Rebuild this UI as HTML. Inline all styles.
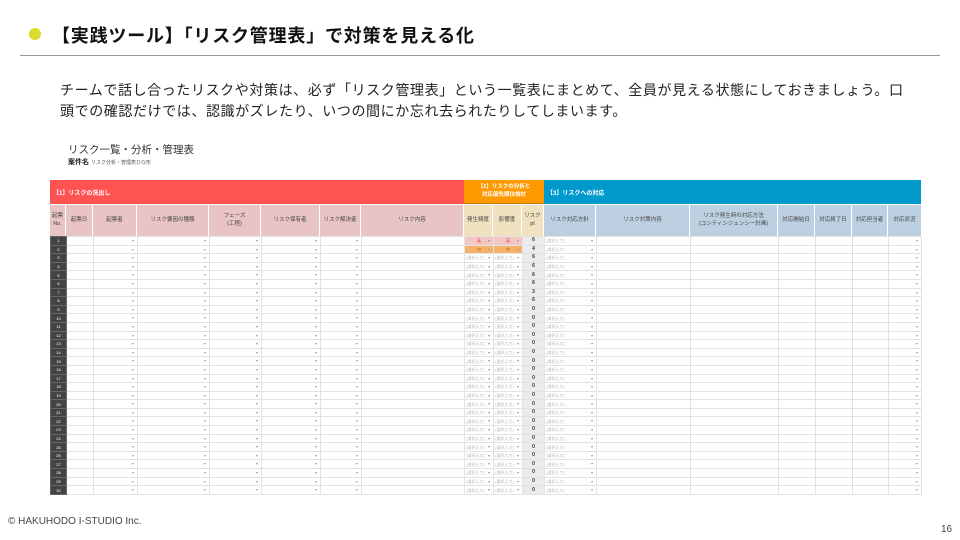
<!DOCTYPE html>
<html><head><meta charset="utf-8"><style>
*{margin:0;padding:0;box-sizing:border-box}
body{width:960px;height:540px;background:#fff;position:relative;overflow:hidden;font-family:"Liberation Sans","Noto Sans CJK JP",sans-serif;color:#222}
.abs{position:absolute}
table{border-collapse:collapse;table-layout:fixed;position:absolute;left:50px;top:236px;width:871px}
td{height:8.6px;border:1px solid #e2e2e2;font-size:4px;line-height:7px;padding:0 1px;position:relative;white-space:nowrap;overflow:hidden;color:#bbb}
td.n{background:#444;color:#fff;text-align:center;border-color:#666}
td.a::after{content:"▾";position:absolute;right:3px;top:0;color:#999;font-size:4px}
td.p{background:#ebebeb;color:#333;text-align:center;font-weight:bold;font-size:5px}
td.h{background:#f4c7c3;color:#d33;text-align:center}
td.m{background:#f6b26b;color:#a50;text-align:center}
.hd{position:absolute;font-size:5.5px;color:#444;text-align:center;display:flex;align-items:center;justify-content:center;line-height:1.3;border-right:1px solid #fff}
</style></head><body>
<div class="abs" style="left:29px;top:28px;width:12px;height:12px;border-radius:50%;background:#d9dc2a"></div>
<div class="abs" style="left:52px;top:22px;font-size:18px;letter-spacing:0.8px;font-weight:bold;color:#111;white-space:nowrap">【実践ツール】「リスク管理表」で対策を見える化</div>
<div class="abs" style="left:20px;top:55px;width:920px;height:1px;background:#999"></div>
<div class="abs" style="left:60px;top:80px;font-size:14px;letter-spacing:0.6px;line-height:21px;color:#222;width:890px;white-space:nowrap">チームで話し合ったリスクや対策は、必ず「リスク管理表」という一覧表にまとめて、全員が見える状態にしておきましょう。口<br>頭での確認だけでは、認識がズレたり、いつの間にか忘れ去られたりしてしまいます。</div>
<div class="abs" style="left:68px;top:142px;font-size:10.5px;color:#333">リスク一覧・分析・管理表</div>
<div class="abs" style="left:68px;top:157px;font-size:7px;font-weight:bold;color:#222">案件名 <span style="font-weight:normal;font-size:5px;color:#555">リスク分析・管理表ひな形</span></div>

<div class="abs" style="left:50px;top:180px;width:414px;height:24px;background:#ff5252;color:#fff;font-size:6px;font-weight:bold;padding:8px 0 0 3px">【1】リスクの洗出し</div>
<div class="abs" style="left:464px;top:180px;width:80px;height:24px;background:#ff9900;color:#fff;font-size:5.5px;font-weight:bold;text-align:center;line-height:8px;padding-top:3px;border-bottom:1px solid #c70">【2】リスクの分析と<br>対応優先順位検討</div>
<div class="abs" style="left:544px;top:180px;width:377px;height:24px;background:#0099cc;color:#fff;font-size:6px;font-weight:bold;padding:8px 0 0 3px">【3】リスクへの対応</div>

<div class="abs" style="left:50px;top:205px;width:414px;height:31px;background:#e8c4c4"></div>
<div class="abs" style="left:464px;top:205px;width:80px;height:31px;background:#f0e2c0"></div>
<div class="abs" style="left:544px;top:205px;width:377px;height:31px;background:#bcd0e2"></div>
<div class="hd" style="left:50px;top:205px;width:16px;height:31px">起票<br>No.</div>
<div class="hd" style="left:66px;top:205px;width:27px;height:31px">起票日</div>
<div class="hd" style="left:93px;top:205px;width:44px;height:31px">起票者</div>
<div class="hd" style="left:137px;top:205px;width:72px;height:31px">リスク要因の種類</div>
<div class="hd" style="left:209px;top:205px;width:52px;height:31px">フェーズ<br>(工程)</div>
<div class="hd" style="left:261px;top:205px;width:59px;height:31px">リスク保有者</div>
<div class="hd" style="left:320px;top:205px;width:41px;height:31px">リスク解決者</div>
<div class="hd" style="left:361px;top:205px;width:103px;height:31px">リスク内容</div>
<div class="hd" style="left:464px;top:205px;width:29px;height:31px">発生頻度</div>
<div class="hd" style="left:493px;top:205px;width:29px;height:31px">影響度</div>
<div class="hd" style="left:522px;top:205px;width:22px;height:31px">リスク<br>pt</div>
<div class="hd" style="left:544px;top:205px;width:52px;height:31px">リスク対応方針</div>
<div class="hd" style="left:596px;top:205px;width:94px;height:31px">リスク対策内容</div>
<div class="hd" style="left:690px;top:205px;width:88px;height:31px">リスク発生時の対応方法<br>(コンティンジェンシー計画)</div>
<div class="hd" style="left:778px;top:205px;width:37px;height:31px">対応開始日</div>
<div class="hd" style="left:815px;top:205px;width:37px;height:31px">対応終了日</div>
<div class="hd" style="left:852px;top:205px;width:36px;height:31px">対応担当者</div>
<div class="hd" style="left:888px;top:205px;width:33px;height:31px;border:0">対応状況</div>

<table>
<colgroup><col style="width:16px"><col style="width:27px"><col style="width:44px"><col style="width:72px"><col style="width:52px"><col style="width:59px"><col style="width:41px"><col style="width:103px"><col style="width:29px"><col style="width:29px"><col style="width:22px"><col style="width:52px"><col style="width:94px"><col style="width:88px"><col style="width:37px"><col style="width:37px"><col style="width:36px"><col style="width:33px"></colgroup>
<tr><td class="n">1</td><td></td><td class="a"></td><td class="a"></td><td class="a"></td><td class="a"></td><td class="a"></td><td></td><td class="h a">高</td><td class="h a">高</td><td class="p">6</td><td class="a">(選択入力)</td><td></td><td></td><td></td><td></td><td></td><td class="a"></td></tr>
<tr><td class="n">2</td><td></td><td class="a"></td><td class="a"></td><td class="a"></td><td class="a"></td><td class="a"></td><td></td><td class="m a">中</td><td class="m a">中</td><td class="p">4</td><td class="a">(選択入力)</td><td></td><td></td><td></td><td></td><td></td><td class="a"></td></tr>
<tr><td class="n">3</td><td></td><td class="a"></td><td class="a"></td><td class="a"></td><td class="a"></td><td class="a"></td><td></td><td class="a">(選択入力)</td><td class="a">(選択入力)</td><td class="p">6</td><td class="a">(選択入力)</td><td></td><td></td><td></td><td></td><td></td><td class="a"></td></tr>
<tr><td class="n">4</td><td></td><td class="a"></td><td class="a"></td><td class="a"></td><td class="a"></td><td class="a"></td><td></td><td class="a">(選択入力)</td><td class="a">(選択入力)</td><td class="p">6</td><td class="a">(選択入力)</td><td></td><td></td><td></td><td></td><td></td><td class="a"></td></tr>
<tr><td class="n">5</td><td></td><td class="a"></td><td class="a"></td><td class="a"></td><td class="a"></td><td class="a"></td><td></td><td class="a">(選択入力)</td><td class="a">(選択入力)</td><td class="p">6</td><td class="a">(選択入力)</td><td></td><td></td><td></td><td></td><td></td><td class="a"></td></tr>
<tr><td class="n">6</td><td></td><td class="a"></td><td class="a"></td><td class="a"></td><td class="a"></td><td class="a"></td><td></td><td class="a">(選択入力)</td><td class="a">(選択入力)</td><td class="p">6</td><td class="a">(選択入力)</td><td></td><td></td><td></td><td></td><td></td><td class="a"></td></tr>
<tr><td class="n">7</td><td></td><td class="a"></td><td class="a"></td><td class="a"></td><td class="a"></td><td class="a"></td><td></td><td class="a">(選択入力)</td><td class="a">(選択入力)</td><td class="p">3</td><td class="a">(選択入力)</td><td></td><td></td><td></td><td></td><td></td><td class="a"></td></tr>
<tr><td class="n">8</td><td></td><td class="a"></td><td class="a"></td><td class="a"></td><td class="a"></td><td class="a"></td><td></td><td class="a">(選択入力)</td><td class="a">(選択入力)</td><td class="p">6</td><td class="a">(選択入力)</td><td></td><td></td><td></td><td></td><td></td><td class="a"></td></tr>
<tr><td class="n">9</td><td></td><td class="a"></td><td class="a"></td><td class="a"></td><td class="a"></td><td class="a"></td><td></td><td class="a">(選択入力)</td><td class="a">(選択入力)</td><td class="p">0</td><td class="a">(選択入力)</td><td></td><td></td><td></td><td></td><td></td><td class="a"></td></tr>
<tr><td class="n">10</td><td></td><td class="a"></td><td class="a"></td><td class="a"></td><td class="a"></td><td class="a"></td><td></td><td class="a">(選択入力)</td><td class="a">(選択入力)</td><td class="p">0</td><td class="a">(選択入力)</td><td></td><td></td><td></td><td></td><td></td><td class="a"></td></tr>
<tr><td class="n">11</td><td></td><td class="a"></td><td class="a"></td><td class="a"></td><td class="a"></td><td class="a"></td><td></td><td class="a">(選択入力)</td><td class="a">(選択入力)</td><td class="p">0</td><td class="a">(選択入力)</td><td></td><td></td><td></td><td></td><td></td><td class="a"></td></tr>
<tr><td class="n">12</td><td></td><td class="a"></td><td class="a"></td><td class="a"></td><td class="a"></td><td class="a"></td><td></td><td class="a">(選択入力)</td><td class="a">(選択入力)</td><td class="p">0</td><td class="a">(選択入力)</td><td></td><td></td><td></td><td></td><td></td><td class="a"></td></tr>
<tr><td class="n">13</td><td></td><td class="a"></td><td class="a"></td><td class="a"></td><td class="a"></td><td class="a"></td><td></td><td class="a">(選択入力)</td><td class="a">(選択入力)</td><td class="p">0</td><td class="a">(選択入力)</td><td></td><td></td><td></td><td></td><td></td><td class="a"></td></tr>
<tr><td class="n">14</td><td></td><td class="a"></td><td class="a"></td><td class="a"></td><td class="a"></td><td class="a"></td><td></td><td class="a">(選択入力)</td><td class="a">(選択入力)</td><td class="p">0</td><td class="a">(選択入力)</td><td></td><td></td><td></td><td></td><td></td><td class="a"></td></tr>
<tr><td class="n">15</td><td></td><td class="a"></td><td class="a"></td><td class="a"></td><td class="a"></td><td class="a"></td><td></td><td class="a">(選択入力)</td><td class="a">(選択入力)</td><td class="p">0</td><td class="a">(選択入力)</td><td></td><td></td><td></td><td></td><td></td><td class="a"></td></tr>
<tr><td class="n">16</td><td></td><td class="a"></td><td class="a"></td><td class="a"></td><td class="a"></td><td class="a"></td><td></td><td class="a">(選択入力)</td><td class="a">(選択入力)</td><td class="p">0</td><td class="a">(選択入力)</td><td></td><td></td><td></td><td></td><td></td><td class="a"></td></tr>
<tr><td class="n">17</td><td></td><td class="a"></td><td class="a"></td><td class="a"></td><td class="a"></td><td class="a"></td><td></td><td class="a">(選択入力)</td><td class="a">(選択入力)</td><td class="p">0</td><td class="a">(選択入力)</td><td></td><td></td><td></td><td></td><td></td><td class="a"></td></tr>
<tr><td class="n">18</td><td></td><td class="a"></td><td class="a"></td><td class="a"></td><td class="a"></td><td class="a"></td><td></td><td class="a">(選択入力)</td><td class="a">(選択入力)</td><td class="p">0</td><td class="a">(選択入力)</td><td></td><td></td><td></td><td></td><td></td><td class="a"></td></tr>
<tr><td class="n">19</td><td></td><td class="a"></td><td class="a"></td><td class="a"></td><td class="a"></td><td class="a"></td><td></td><td class="a">(選択入力)</td><td class="a">(選択入力)</td><td class="p">0</td><td class="a">(選択入力)</td><td></td><td></td><td></td><td></td><td></td><td class="a"></td></tr>
<tr><td class="n">20</td><td></td><td class="a"></td><td class="a"></td><td class="a"></td><td class="a"></td><td class="a"></td><td></td><td class="a">(選択入力)</td><td class="a">(選択入力)</td><td class="p">0</td><td class="a">(選択入力)</td><td></td><td></td><td></td><td></td><td></td><td class="a"></td></tr>
<tr><td class="n">21</td><td></td><td class="a"></td><td class="a"></td><td class="a"></td><td class="a"></td><td class="a"></td><td></td><td class="a">(選択入力)</td><td class="a">(選択入力)</td><td class="p">0</td><td class="a">(選択入力)</td><td></td><td></td><td></td><td></td><td></td><td class="a"></td></tr>
<tr><td class="n">22</td><td></td><td class="a"></td><td class="a"></td><td class="a"></td><td class="a"></td><td class="a"></td><td></td><td class="a">(選択入力)</td><td class="a">(選択入力)</td><td class="p">0</td><td class="a">(選択入力)</td><td></td><td></td><td></td><td></td><td></td><td class="a"></td></tr>
<tr><td class="n">23</td><td></td><td class="a"></td><td class="a"></td><td class="a"></td><td class="a"></td><td class="a"></td><td></td><td class="a">(選択入力)</td><td class="a">(選択入力)</td><td class="p">0</td><td class="a">(選択入力)</td><td></td><td></td><td></td><td></td><td></td><td class="a"></td></tr>
<tr><td class="n">24</td><td></td><td class="a"></td><td class="a"></td><td class="a"></td><td class="a"></td><td class="a"></td><td></td><td class="a">(選択入力)</td><td class="a">(選択入力)</td><td class="p">0</td><td class="a">(選択入力)</td><td></td><td></td><td></td><td></td><td></td><td class="a"></td></tr>
<tr><td class="n">25</td><td></td><td class="a"></td><td class="a"></td><td class="a"></td><td class="a"></td><td class="a"></td><td></td><td class="a">(選択入力)</td><td class="a">(選択入力)</td><td class="p">0</td><td class="a">(選択入力)</td><td></td><td></td><td></td><td></td><td></td><td class="a"></td></tr>
<tr><td class="n">26</td><td></td><td class="a"></td><td class="a"></td><td class="a"></td><td class="a"></td><td class="a"></td><td></td><td class="a">(選択入力)</td><td class="a">(選択入力)</td><td class="p">0</td><td class="a">(選択入力)</td><td></td><td></td><td></td><td></td><td></td><td class="a"></td></tr>
<tr><td class="n">27</td><td></td><td class="a"></td><td class="a"></td><td class="a"></td><td class="a"></td><td class="a"></td><td></td><td class="a">(選択入力)</td><td class="a">(選択入力)</td><td class="p">0</td><td class="a">(選択入力)</td><td></td><td></td><td></td><td></td><td></td><td class="a"></td></tr>
<tr><td class="n">28</td><td></td><td class="a"></td><td class="a"></td><td class="a"></td><td class="a"></td><td class="a"></td><td></td><td class="a">(選択入力)</td><td class="a">(選択入力)</td><td class="p">0</td><td class="a">(選択入力)</td><td></td><td></td><td></td><td></td><td></td><td class="a"></td></tr>
<tr><td class="n">29</td><td></td><td class="a"></td><td class="a"></td><td class="a"></td><td class="a"></td><td class="a"></td><td></td><td class="a">(選択入力)</td><td class="a">(選択入力)</td><td class="p">0</td><td class="a">(選択入力)</td><td></td><td></td><td></td><td></td><td></td><td class="a"></td></tr>
<tr><td class="n">30</td><td></td><td class="a"></td><td class="a"></td><td class="a"></td><td class="a"></td><td class="a"></td><td></td><td class="a">(選択入力)</td><td class="a">(選択入力)</td><td class="p">0</td><td class="a">(選択入力)</td><td></td><td></td><td></td><td></td><td></td><td class="a"></td></tr>
</table>

<div class="abs" style="left:8px;top:516px;font-size:10px;color:#444">© HAKUHODO I-STUDIO Inc.</div>
<div class="abs" style="left:941px;top:524px;font-size:10px;color:#444">16</div>
</body></html>
